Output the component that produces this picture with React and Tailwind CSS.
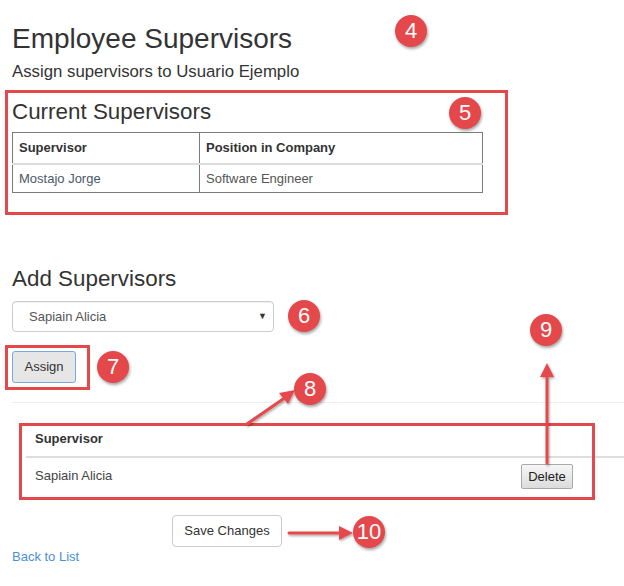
import React from 'react';

const RED = '#e5484b';

// numbered red marker laid over the page
const Badge = ({ n, className }) => (
  <div
    className={`absolute flex h-[32px] w-[32px] items-center justify-center rounded-full bg-[#e5484b] text-[22px] leading-none text-white shadow-[1px_2px_3px_rgba(0,0,0,0.35)] ${className}`}
  >
    {n}
  </div>
);

const Arrows = () => (
  <svg className="pointer-events-none absolute left-0 top-0" width="624" height="586">
    <defs>
      <filter id="sh" x="-20%" y="-20%" width="140%" height="140%">
        <feDropShadow dx="1" dy="1.5" stdDeviation="1" floodColor="#000" floodOpacity="0.35" />
      </filter>
    </defs>
    <g filter="url(#sh)" fill={RED} stroke={RED} strokeLinecap="round">
      {/* 8 */}
      <line x1="247" y1="424" x2="286" y2="397" strokeWidth="3" />
      <polygon points="295,390 279,393 288,404" stroke="none" />
      {/* 9 */}
      <line x1="547" y1="463" x2="547" y2="375" strokeWidth="3" />
      <polygon points="547,363 540,377 554,377" stroke="none" />
      {/* 10 */}
      <line x1="289" y1="533" x2="342" y2="533" strokeWidth="3" />
      <polygon points="353,533 339,526 339,540" stroke="none" />
    </g>
  </svg>
);

export default function App() {
  return (
    <div className="relative h-[586px] w-full overflow-hidden bg-white font-['Liberation_Sans',Arial,sans-serif] text-[#333]">
      <div className="pl-3">
        <h1 className="mt-[24px] text-[28px] leading-[30.8px]">Employee Supervisors</h1>
        <p className="mt-[7px] text-[16.8px] leading-[20px]">Assign supervisors to Usuario Ejemplo</p>

        <h2 className="mt-[18px] text-[22.4px] leading-[24.6px]">Current Supervisors</h2>
        <table className="mt-[8px] w-[471px] border-collapse border border-[#7a7a7a] text-[13px]">
          <thead>
            <tr className="h-[31px] border-b-2 border-[#ddd]">
              <th className="w-[187px] border-r border-[#7a7a7a] px-[6px] text-left font-bold">Supervisor</th>
              <th className="px-[6px] text-left font-bold">Position in Company</th>
            </tr>
          </thead>
          <tbody>
            <tr className="h-[29px]">
              <td className="border-r border-[#7a7a7a] px-[6px] text-[#4d5868]">Mostajo Jorge</td>
              <td className="px-[6px] text-[#555]">Software Engineer</td>
            </tr>
          </tbody>
        </table>

        <h2 className="mt-[74px] text-[22.4px] leading-[24.6px]">Add Supervisors</h2>
        <div className="relative mt-[9px] flex h-[31px] w-[262px] items-center rounded-[4px] border border-[#ccc] pl-[16px] text-[13px] text-[#555] shadow-[inset_0_1px_1px_rgba(0,0,0,0.06)]">
          Sapiain Alicia
          <span className="absolute right-[6px] top-[8px] text-[9px] text-[#333]">▼</span>
        </div>
        <button className="mt-[19px] flex h-[32px] w-[64px] items-center justify-center rounded-[3px] border border-[#7aa7dc] bg-[#e6e6e6] text-[13px] text-[#333]">
          Assign
        </button>
      </div>

      <div className="ml-3 mt-[19px] h-px bg-[#eee]" />

      <div className="ml-[26px] mt-[18px] w-[700px] text-[13px]">
        <div className="flex h-[37px] items-center border-b-2 border-[#ddd] pl-[9px] font-bold">Supervisor</div>
        <div className="flex h-[35px] items-center pl-[9px] text-[#444]">
          <span className="w-[486px]">Sapiain Alicia</span>
          <button className="mt-[3px] h-[25px] w-[52px] rounded-[2px] border border-[#aaa] bg-gradient-to-b from-[#f6f6f6] to-[#dcdcdc] text-[13px] text-[#222]">
            Delete
          </button>
        </div>
      </div>

      <div className="pl-3">
        <button className="ml-[160px] mt-[22px] flex h-[32px] w-[110px] items-center justify-center rounded-[4px] border border-[#ccc] bg-white text-[13px] text-[#333]">
          Save Changes
        </button>
        <a href="#" className="block pt-[1px] text-[13px] leading-[18px] text-[#4a8fd6]">Back to List</a>
      </div>

      {/* annotation boxes */}
      <div className="absolute left-[5px] top-[90px] h-[125px] w-[503px] border-[3px] border-[#e5484b]" />
      <div className="absolute left-[5px] top-[345px] h-[45px] w-[85px] border-[3px] border-[#e5484b]" />
      <div className="absolute left-[19px] top-[423px] h-[77px] w-[576px] border-[3px] border-[#e5484b]" />

      <Arrows />

      <Badge n="4" className="left-[395px] top-[15px]" />
      <Badge n="5" className="left-[449px] top-[97px]" />
      <Badge n="6" className="left-[288px] top-[300px]" />
      <Badge n="7" className="left-[97px] top-[351px]" />
      <Badge n="8" className="left-[294px] top-[373px]" />
      <Badge n="9" className="left-[530px] top-[314px]" />
      <Badge n="10" className="left-[353px] top-[516px]" />
    </div>
  );
}
